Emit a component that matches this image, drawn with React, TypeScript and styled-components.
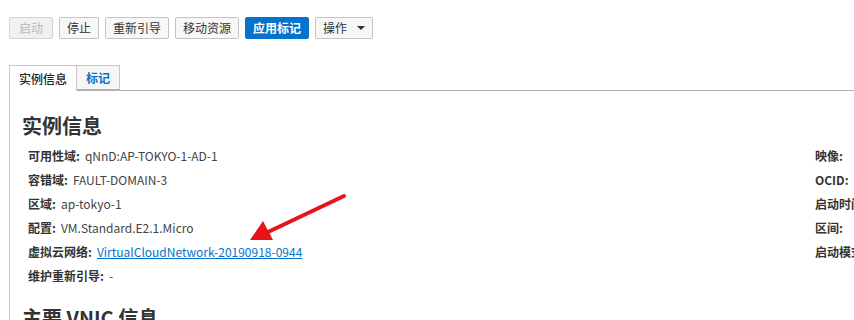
import styled, { createGlobalStyle } from "styled-components";

const GlobalStyle = createGlobalStyle`
  html, body {
    margin: 0;
    padding: 0;
    background: #fff;
    overflow: hidden;
  }
  body {
    font-family: "Noto Sans CJK SC", "Noto Sans", "Liberation Sans", sans-serif;
    font-size: 12px;
    color: #333;
  }
`;

const Page = styled.div`
  width: 854px;
  height: 320px;
  position: relative;
  overflow: hidden;
`;

const Toolbar = styled.div`
  display: flex;
  gap: 6px;
  padding: 17px 0 0 9px;
`;

const ActionButton = styled.button<{ $primary?: boolean }>`
  height: 22px;
  padding: 0 7px;
  font-family: inherit;
  font-size: 12px;
  line-height: 20px;
  border-radius: 2px;
  border: 1px solid ${(p) => (p.$primary ? "#0572ce" : "#c4c4c4")};
  background: ${(p) => (p.$primary ? "#0572ce" : "#f7f7f7")};
  color: ${(p) => (p.$primary ? "#fff" : "#333")};
  font-weight: ${(p) => (p.$primary ? 600 : 400)};
  display: flex;
  align-items: center;
  gap: 8px;
  &:disabled {
    padding: 0 9px;
    color: #b9b9b9;
    background: #f0f0f0;
    border-color: #d4d4d4;
  }
`;

const Caret = styled.span`
  width: 0;
  height: 0;
  border-left: 4px solid transparent;
  border-right: 4px solid transparent;
  border-top: 4px solid #333;
  margin-left: 2px;
`;

const Tabs = styled.div`
  display: flex;
  margin: 26px 0 0 9px;
  border-bottom: 1px solid #b0b0b0;
  height: 25px;
`;

const Tab = styled.div<{ $active?: boolean }>`
  height: ${(p) => (p.$active ? "26px" : "25px")};
  box-sizing: border-box;
  padding: 0 9px;
  display: flex;
  align-items: center;
  font-size: 12px;
  border: 1px solid #c8c8c8;
  border-bottom: ${(p) => (p.$active ? "none" : "1px solid #b0b0b0")};
  background: ${(p) => (p.$active ? "#fff" : "#f6f6f6")};
  color: ${(p) => (p.$active ? "#222" : "#0572ce")};
  font-weight: ${(p) => (p.$active ? 500 : 600)};
  & + & {
    border-left: none;
  }
`;

const Panel = styled.div`
  margin-left: 9px;
  border-left: 1px solid #c8c8c8;
  padding: 21px 0 0 12px;
  height: 240px;
`;

const Heading = styled.h2`
  margin: 0 0 4px 0;
  font-size: 20px;
  font-weight: 700;
  color: #333;
  line-height: 28px;
`;

const InfoGrid = styled.div`
  display: grid;
  grid-template-columns: 787px 1fr;
  padding-left: 6px;
`;

const Column = styled.div`
  display: flex;
  flex-direction: column;
`;

const Row = styled.div`
  height: 24px;
  line-height: 24px;
  white-space: nowrap;
  overflow: hidden;
`;

const Label = styled.span`
  font-weight: 600;
  color: #333;
  margin-right: 5px;
`;

const Value = styled.span`
  color: #444;
`;

const Link = styled.a`
  color: #0572ce;
  text-decoration: underline;
`;

const SubHeading = styled.h2`
  margin: 16px 0 0 0;
  font-size: 20px;
  font-weight: 700;
  color: #333;
  line-height: 28px;
`;

const Arrow = styled.svg`
  position: absolute;
  left: 240px;
  top: 185px;
`;

const leftRows: [string, React.ReactNode][] = [
  ["可用性域:", "qNnD:AP-TOKYO-1-AD-1"],
  ["容错域:", "FAULT-DOMAIN-3"],
  ["区域:", "ap-tokyo-1"],
  ["配置:", "VM.Standard.E2.1.Micro"],
  ["虚拟云网络:", <Link href="#">VirtualCloudNetwork-20190918-0944</Link>],
  ["维护重新引导:", "-"],
];

const rightRows = ["映像:", "OCID:", "启动时间:", "区间:", "启动模式:"];

export default function App() {
  return (
    <Page>
      <GlobalStyle />
      <Toolbar>
        <ActionButton disabled>启动</ActionButton>
        <ActionButton>停止</ActionButton>
        <ActionButton>重新引导</ActionButton>
        <ActionButton>移动资源</ActionButton>
        <ActionButton $primary>应用标记</ActionButton>
        <ActionButton>
          操作 <Caret />
        </ActionButton>
      </Toolbar>
      <Tabs>
        <Tab $active>实例信息</Tab>
        <Tab>标记</Tab>
      </Tabs>
      <Panel>
        <Heading>实例信息</Heading>
        <InfoGrid>
          <Column>
            {leftRows.map(([label, value]) => (
              <Row key={label}>
                <Label>{label}</Label>
                <Value>{value}</Value>
              </Row>
            ))}
          </Column>
          <Column>
            {rightRows.map((label) => (
              <Row key={label}>
                <Label>{label}</Label>
              </Row>
            ))}
          </Column>
        </InfoGrid>
        <SubHeading>主要 VNIC 信息</SubHeading>
      </Panel>
      <Arrow width="110" height="60" viewBox="0 0 110 60">
        <line x1="104" y1="11" x2="28" y2="47" stroke="#e8141a" strokeWidth="4" strokeLinecap="round" />
        <polygon points="10,55 23,36 33,55" fill="#e8141a" />
      </Arrow>
    </Page>
  );
}
